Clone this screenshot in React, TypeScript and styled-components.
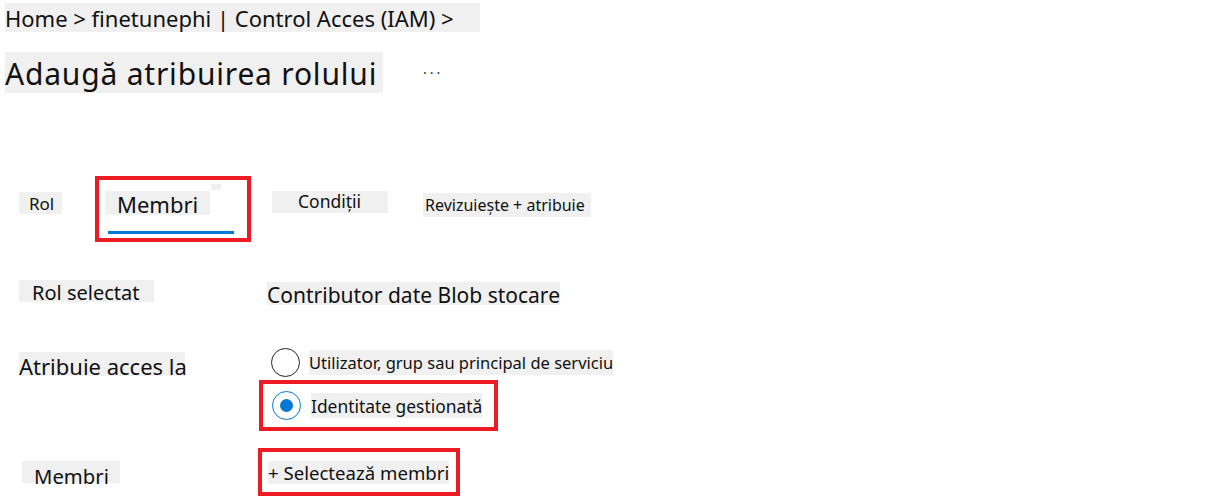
import styled, { createGlobalStyle } from 'styled-components';

const GlobalStyle = createGlobalStyle`
  body {
    margin: 0;
    background: #fff;
    font-family: "Noto Sans", "Open Sans", sans-serif;
    color: #111;
  }
`;

const Page = styled.div`
  padding: 3px 0 0 5px;
  width: 1207px;
  height: 496px;
  overflow: hidden;
`;

const Patch = styled.span`
  display: inline-flex;
  align-items: center;
  background: #f0f0f0;
  white-space: nowrap;
  line-height: 1;
  box-sizing: border-box;
`;

const Breadcrumb = styled(Patch)`
  width: 475px;
  height: 29px;
  font-size: 22px;
  padding-top: 1px;
`;

const TitleRow = styled.div`
  display: flex;
  align-items: center;
  margin-top: 20px;
  gap: 40px;
`;

const Title = styled(Patch)`
  width: 378px;
  height: 41px;
  font-size: 30px;
  letter-spacing: 0.8px;
  padding-top: 2px;
`;

const Ellipsis = styled.span`
  font-size: 14px;
  letter-spacing: 3px;
  color: #333;
  margin-top: 0;
`;

const Tabs = styled.div`
  display: flex;
  align-items: flex-start;
  margin-top: 83px;
  margin-left: 14px;
`;

const Tab = styled(Patch)<{ $w: number; $size: number; $pad: number; $top: number }>`
  width: ${(p) => p.$w}px;
  height: ${(p) => (p.$size > 16 ? 22 : 24)}px;
  font-size: ${(p) => p.$size}px;
  padding-left: ${(p) => p.$pad}px;
  margin-top: ${(p) => p.$top}px;
`;

const RedBox = styled.div`
  border: 4px solid #ed1c24;
  box-sizing: border-box;
`;

const ActiveTab = styled(RedBox)`
  width: 156px;
  height: 66px;
  margin-left: 33px;
  margin-right: 21px;
  padding: 11px 0 0 6px;
  position: relative;
`;

const ActiveLabel = styled(Patch)`
  width: 105px;
  height: 24px;
  font-size: 22px;
  padding: 2px 0 0 12px;
`;

const Speck = styled.span`
  position: absolute;
  left: 112px;
  top: 4px;
  width: 10px;
  height: 6px;
  background: #f0f0f0;
`;

const Underline = styled.div`
  margin: 13px 0 0 3px;
  width: 126px;
  height: 3px;
  background: #0078d4;
`;

const Form = styled.div`
  display: grid;
  grid-template-columns: 253px auto;
  align-items: start;
  margin-top: 38px;
  margin-left: 14px;
`;

const Label = styled(Patch)<{ $w: number; $size: number; $pad: number }>`
  width: ${(p) => p.$w}px;
  height: 22px;
  font-size: ${(p) => p.$size}px;
  padding-left: ${(p) => p.$pad}px;
  padding-top: 3px;
  justify-self: start;
`;

const Value = styled(Patch)`
  height: 23px;
  font-size: 21px;
  padding-top: 3px;
  justify-self: start;
  margin: 2px 0 0 -5px;
`;

const Spacer = styled.div<{ $h: number }>`
  grid-column: 1 / -1;
  height: ${(p) => p.$h}px;
`;

const Options = styled.div`
  display: flex;
  flex-direction: column;
  margin-left: -13px;
`;

const Option = styled.div`
  display: flex;
  align-items: center;
  gap: 9px;
  padding-left: 12px;
`;

const Radio = styled.span<{ $checked?: boolean }>`
  width: 29px;
  height: 29px;
  border-radius: 50%;
  box-sizing: border-box;
  border: 1.5px solid ${(p) => (p.$checked ? '#0078d4' : '#222')};
  display: flex;
  align-items: center;
  justify-content: center;
  flex: none;
  &::after {
    content: '';
    display: ${(p) => (p.$checked ? 'block' : 'none')};
    width: 13px;
    height: 13px;
    border-radius: 50%;
    background: #0078d4;
  }
`;

const OptionText = styled(Patch)<{ $size: number }>`
  height: 25px;
  font-size: ${(p) => p.$size}px;
  padding-top: 2px;
`;

const SelectedOption = styled(RedBox)`
  width: 239px;
  height: 51px;
  margin-top: 3px;
  display: flex;
  align-items: center;
  gap: 10px;
  padding-left: 9px;
`;

const AddBox = styled(RedBox)`
  width: 202px;
  height: 48px;
  margin-left: -14px;
  display: flex;
  align-items: center;
  padding-left: 6px;
`;

const AddText = styled(Patch)`
  height: 23px;
  font-size: 18.6px;
  padding-top: 2px;
`;

const App = () => (
  <>
    <GlobalStyle />
    <Page>
      <Breadcrumb>Home &gt; finetunephi | Control Acces (IAM) &gt;</Breadcrumb>
      <TitleRow>
        <Title>Adaugă atribuirea rolului</Title>
        <Ellipsis>···</Ellipsis>
      </TitleRow>

      <Tabs>
        <Tab $w={43} $size={17} $pad={10} $top={16}>Rol</Tab>
        <ActiveTab>
          <ActiveLabel>Membri</ActiveLabel>
          <Speck />
          <Underline />
        </ActiveTab>
        <Tab $w={116} $size={17.5} $pad={26} $top={15}>Condiții</Tab>
        <Tab $w={168} $size={16} $pad={2} $top={17} style={{ marginLeft: 35 }}>
          Revizuiește + atribuie
        </Tab>
      </Tabs>

      <Form>
        <Label $w={135} $size={20} $pad={13}>Rol selectat</Label>
        <Value>Contributor date Blob stocare</Value>

        <Spacer $h={43} />

        <Label $w={166} $size={22} $pad={0} style={{ marginTop: 4, height: 24 }}>
          Atribuie acces la
        </Label>
        <Options>
          <Option>
            <Radio />
            <OptionText $size={16.5}>Utilizator, grup sau principal de serviciu</OptionText>
          </Option>
          <SelectedOption>
            <Radio $checked />
            <OptionText $size={17.4}>Identitate gestionată</OptionText>
          </SelectedOption>
        </Options>

        <Spacer $h={17} />

        <Label $w={98} $size={20.3} $pad={12} style={{ marginTop: 13, marginLeft: 3, paddingTop: 8 }}>
          Membri
        </Label>
        <AddBox>
          <AddText>+ Selectează membri</AddText>
        </AddBox>
      </Form>
    </Page>
  </>
);

export default App;
